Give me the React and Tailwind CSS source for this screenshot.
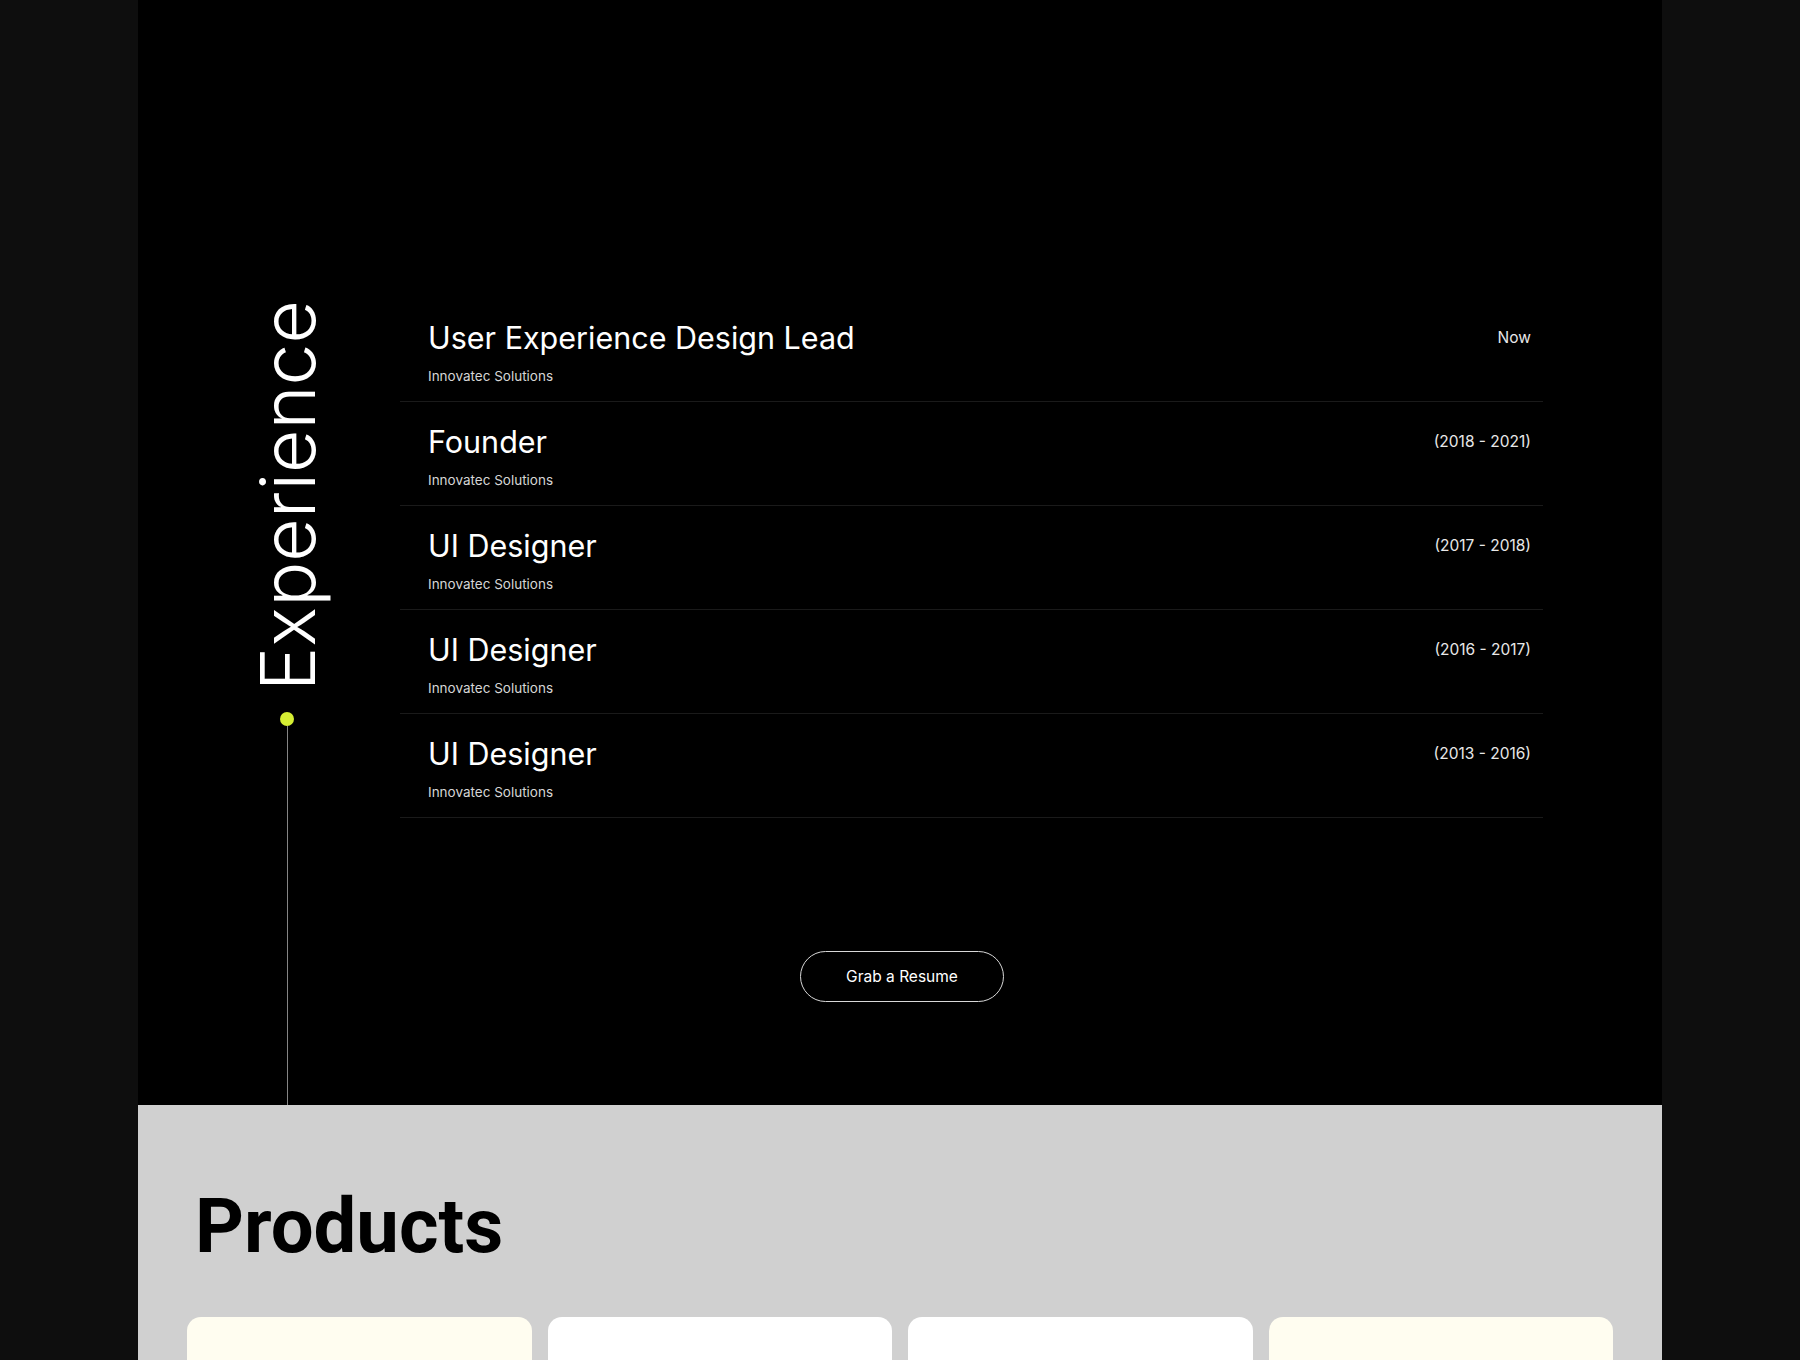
import React from "react";

const jobs = [
    { title: "User Experience Design Lead", company: "Innovatec Solutions", period: "Now" },
    { title: "Founder", company: "Innovatec Solutions", period: "(2018 - 2021)" },
    { title: "UI Designer", company: "Innovatec Solutions", period: "(2017 - 2018)" },
    { title: "UI Designer", company: "Innovatec Solutions", period: "(2016 - 2017)" },
    { title: "UI Designer", company: "Innovatec Solutions", period: "(2013 - 2016)" },
];

const cards = ["bg-[#fffdf0]", "bg-white", "bg-white", "bg-[#fffdf0]"];

function JobRow({ job }) {
    return (
        <div className="border-b border-[#1a1a1a] pl-[28px] pr-[12px] pt-[22px] pb-[15px]">
            <div className="flex items-center justify-between">
                <h3 className="text-[30.5px] leading-[36px] font-normal text-white">{job.title}</h3>
                <span className="text-[15.5px] leading-[36px] text-[#e8e8e8]">{job.period}</span>
            </div>
            <p className="mt-[10px] text-[13.5px] leading-[20px] text-[#d6d6d6]">{job.company}</p>
        </div>
    );
}

export default function App() {
    return (
        <div className="min-h-screen bg-[#0e0e0e] font-['Inter','Noto_Sans',sans-serif]">
            <div className="mx-auto w-[1524px]">
                <section className="bg-black">
                    <div className="grid grid-cols-[80px_1143px] gap-x-[73px] pl-[109px] pt-[298px]">
                        <div className="col-start-1 row-start-1 row-span-2 flex flex-col items-center">
                            <h2 className="mt-[2px] rotate-180 text-[75px] leading-none font-light text-white [writing-mode:vertical-rl]">
                                Experience
                            </h2>
                            <span className="mt-[21px] h-[14px] w-[14px] shrink-0 rounded-full bg-[#d5ee33]" />
                            <span className="w-px flex-1 bg-[#858585]" />
                        </div>

                        <div className="col-start-2 row-start-1">
                            {jobs.map((job, i) => (
                                <JobRow key={i} job={job} />
                            ))}
                        </div>

                        <div className="col-start-1 col-span-2 row-start-2 flex justify-center pl-[14px] pt-[133px] pb-[103px]">
                            <button className="h-[51px] w-[204px] rounded-full border border-[#d8d8d8] text-[15.5px] font-normal text-white">
                                Grab a Resume
                            </button>
                        </div>
                    </div>
                </section>

                <section className="bg-[#d0d0d0] px-[49px] pt-[83px]">
                    <h2 className="ml-[8px] font-['Roboto','Liberation_Sans',sans-serif] text-[76px] leading-none font-bold text-black">
                        Products
                    </h2>
                    <div className="mt-[53px] grid grid-cols-4 gap-4">
                        {cards.map((c, i) => (
                            <div key={i} className={`h-[320px] rounded-[14px] ${c}`} />
                        ))}
                    </div>
                </section>
            </div>
        </div>
    );
}
